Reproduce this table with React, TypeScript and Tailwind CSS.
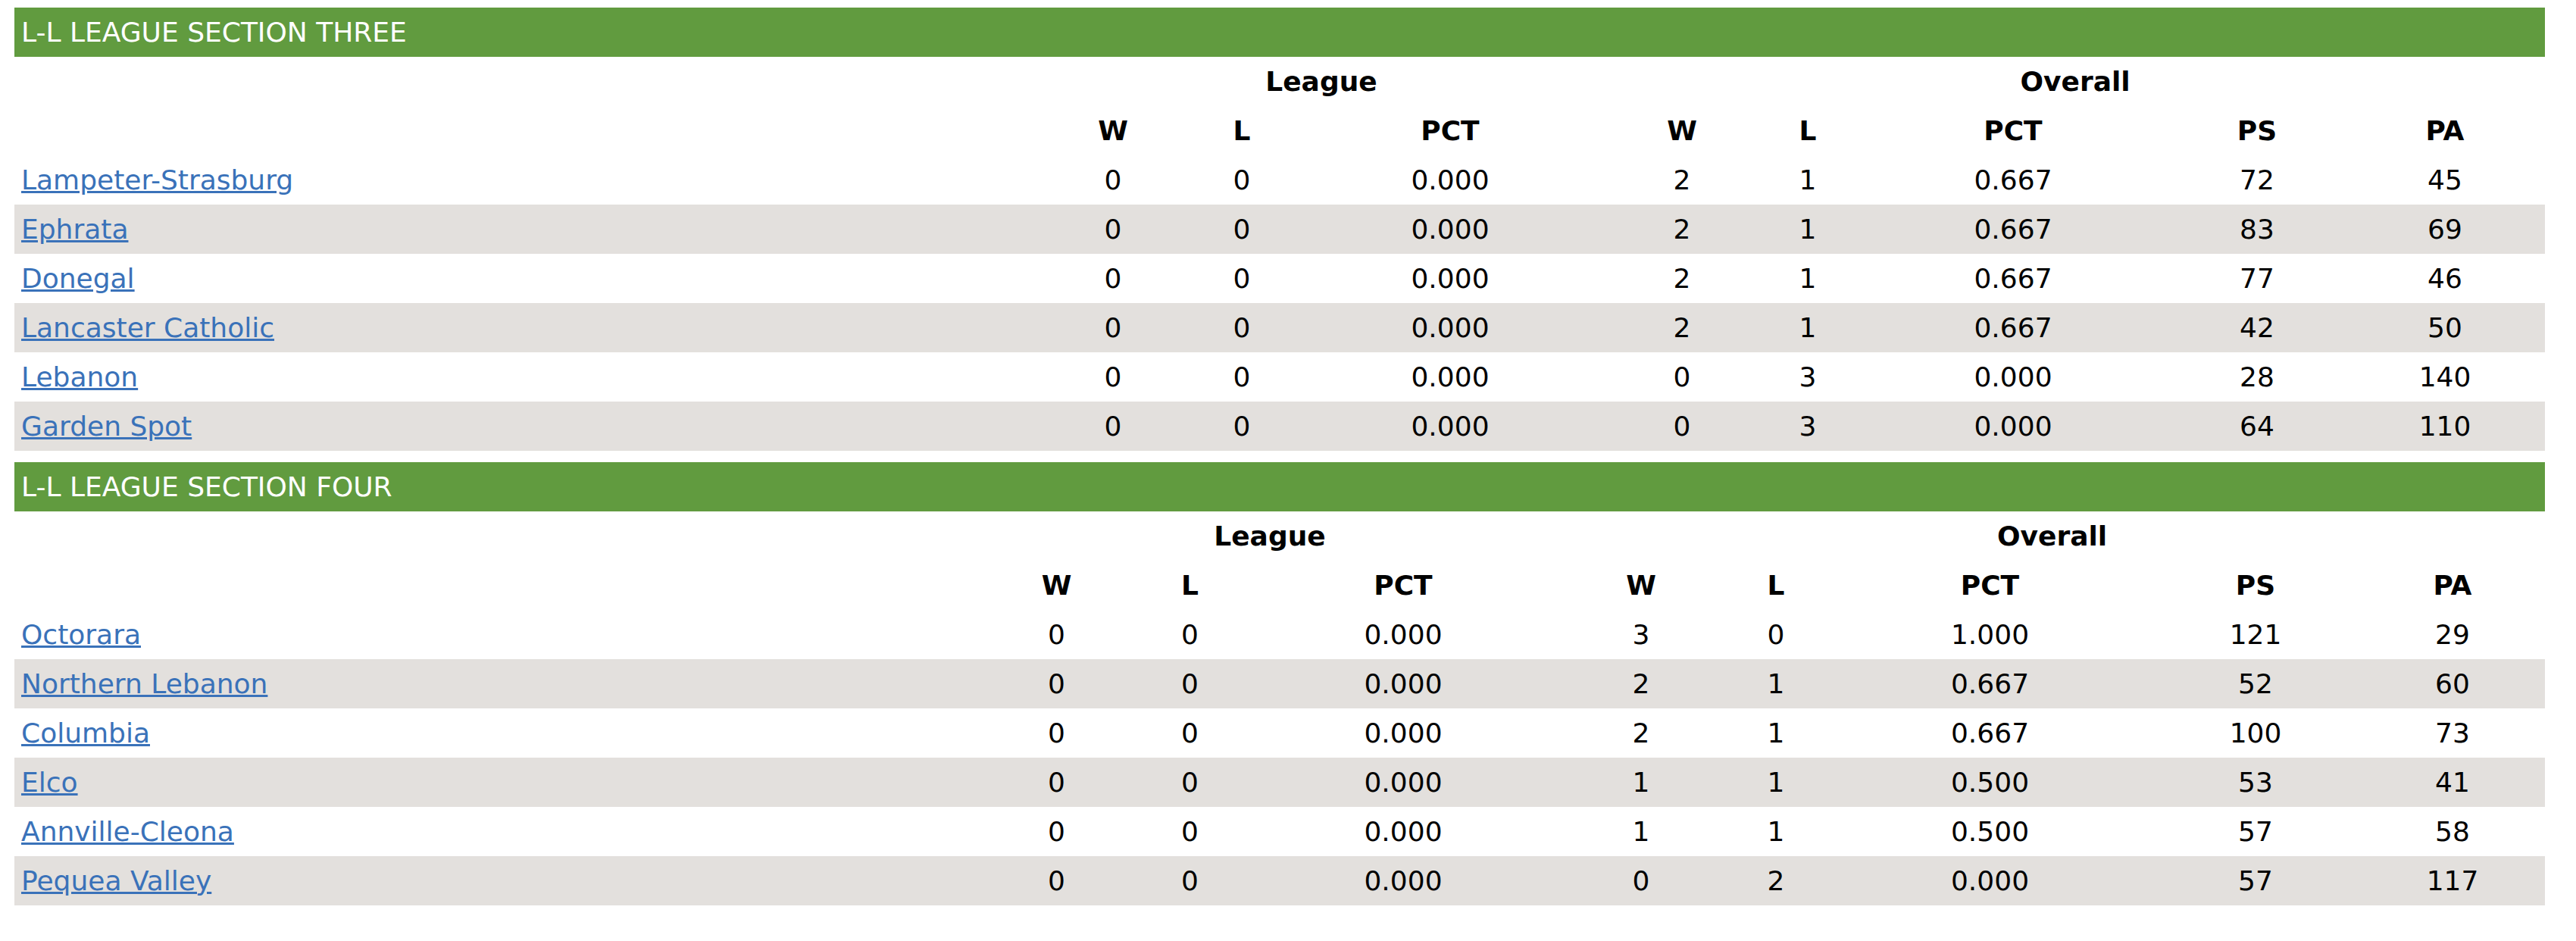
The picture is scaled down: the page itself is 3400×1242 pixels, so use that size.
type Team = [string, string, string, string, string, string, string, string, string];

interface Section {
  title: string;
  cols: string;
  teams: Team[];
}

const sections: Section[] = [
  {
    title: "L-L LEAGUE SECTION THREE",
    cols: "grid-cols-[1350px_200px_140px_410px_202px_130px_412px_232px_264px]",
    teams: [
      ["Lampeter-Strasburg", "0", "0", "0.000", "2", "1", "0.667", "72", "45"],
      ["Ephrata", "0", "0", "0.000", "2", "1", "0.667", "83", "69"],
      ["Donegal", "0", "0", "0.000", "2", "1", "0.667", "77", "46"],
      ["Lancaster Catholic", "0", "0", "0.000", "2", "1", "0.667", "42", "50"],
      ["Lebanon", "0", "0", "0.000", "0", "3", "0.000", "28", "140"],
      ["Garden Spot", "0", "0", "0.000", "0", "3", "0.000", "64", "110"],
    ],
  },
  {
    title: "L-L LEAGUE SECTION FOUR",
    cols: "grid-cols-[1275px_201px_151px_412px_216px_140px_425px_276px_244px]",
    teams: [
      ["Octorara", "0", "0", "0.000", "3", "0", "1.000", "121", "29"],
      ["Northern Lebanon", "0", "0", "0.000", "2", "1", "0.667", "52", "60"],
      ["Columbia", "0", "0", "0.000", "2", "1", "0.667", "100", "73"],
      ["Elco", "0", "0", "0.000", "1", "1", "0.500", "53", "41"],
      ["Annville-Cleona", "0", "0", "0.000", "1", "1", "0.500", "57", "58"],
      ["Pequea Valley", "0", "0", "0.000", "0", "2", "0.000", "57", "117"],
    ],
  },
];

const statHeads = ["W", "L", "PCT", "W", "L", "PCT", "PS", "PA"];

function Standings({ section }: { section: Section }) {
  return (
    <div className="w-[3340px]">
      <div className="h-[65px] bg-[#619b3f] flex items-center pl-[9px] text-white">
        {section.title}
      </div>

      <div className={`grid ${section.cols} h-[65px] items-center font-bold`}>
        <div />
        <div className="col-span-3 text-center">League</div>
        <div className="col-span-5 text-center">Overall</div>
      </div>

      <div className={`grid ${section.cols} h-[65px] items-center font-bold`}>
        <div />
        {statHeads.map((h, i) => (
          <div key={i} className="text-center">
            {h}
          </div>
        ))}
      </div>

      {section.teams.map((team, r) => (
        <div
          key={team[0]}
          className={`grid ${section.cols} h-[65px] items-center ${r % 2 === 1 ? "bg-[#e3e0dd]" : "bg-white"}`}
        >
          <div className="pl-[9px]">
            <a href="#" className="text-[#3a72b9] underline">
              {team[0]}
            </a>
          </div>
          {team.slice(1).map((v, i) => (
            <div key={i} className="text-center">
              {v}
            </div>
          ))}
        </div>
      ))}
    </div>
  );
}

export default function App() {
  return (
    <div className="min-h-[1242px] bg-white pt-[10px] pl-[19px] text-[36px] text-black font-['DejaVu_Sans','Open_Sans',sans-serif]">
      <div className="flex flex-col gap-[15px]">
        {sections.map((s) => (
          <Standings key={s.title} section={s} />
        ))}
      </div>
    </div>
  );
}
